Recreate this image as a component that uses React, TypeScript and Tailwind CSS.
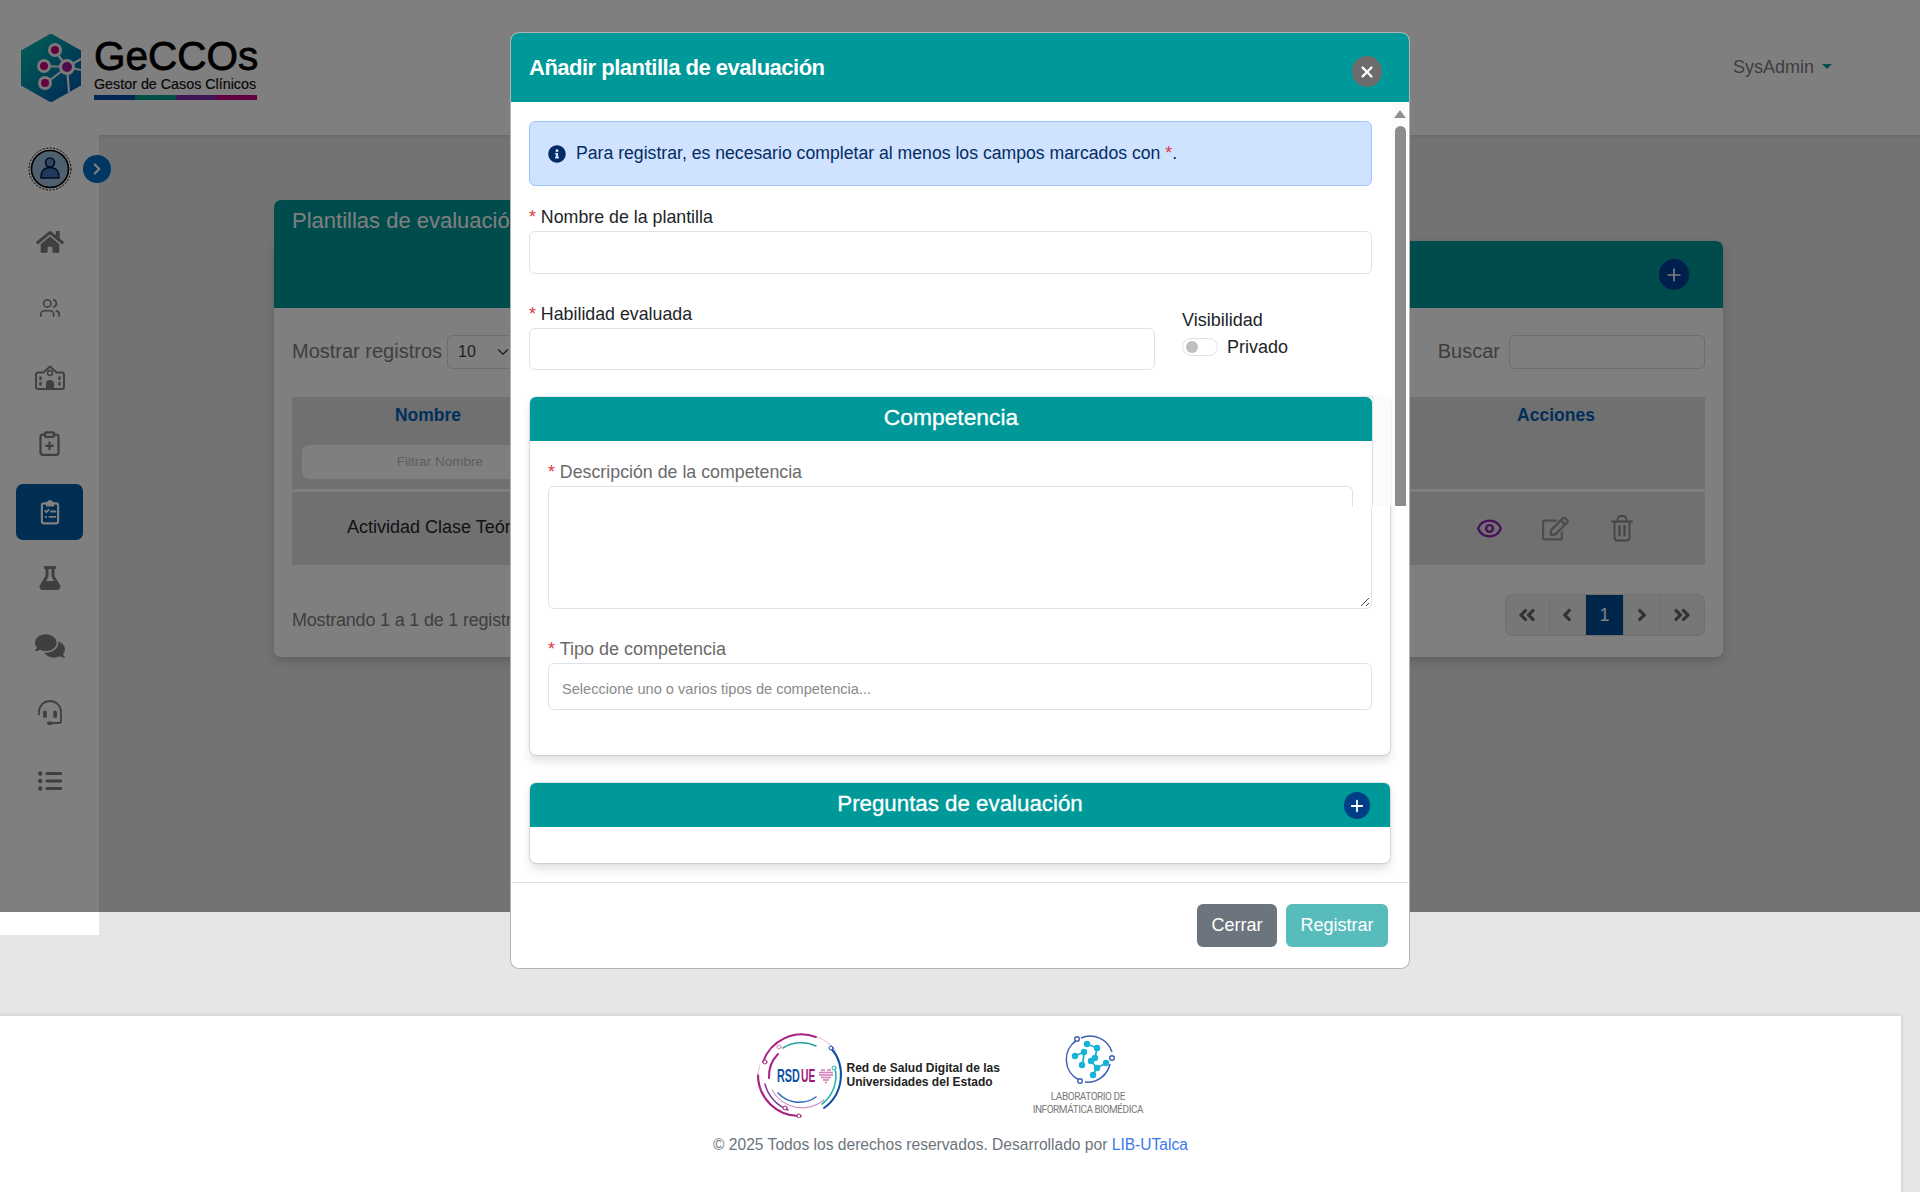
import {
  ChevronDown,
  ChevronRight,
  ClipboardPlus,
  Eye,
  Plus,
  Users,
  X,
} from "lucide-react";
import {
  FaAngleDoubleLeft,
  FaAngleDoubleRight,
  FaAngleLeft,
  FaAngleRight,
  FaComments,
  FaFlask,
  FaHome,
  FaInfoCircle,
  FaListUl,
  FaRegEdit,
} from "react-icons/fa";

const GeccosHex = () => (
  <svg width="60" height="68" viewBox="0 0 60 68">
    <defs>
      <linearGradient id="hexFill" x1="0" y1="0" x2="1" y2="1">
        <stop offset="0" stopColor="#00c0a8" />
        <stop offset="1" stopColor="#0050b0" />
      </linearGradient>
    </defs>
    <path d="M30 0 60 17V51L30 68 0 51V17Z" fill="url(#hexFill)" stroke="url(#hexFill)" strokeLinejoin="round" />
    <g stroke="#f2f2f2" strokeWidth="2.2" fill="none">
      <path d="M34 17 46 33M23 32 46 33M24 50 46 33M46 33 48 58M46 33 60 25M46 33 60 36" />
    </g>
    <g stroke="#f2f2f2" strokeWidth="3" fill="#c8007e">
      <circle cx="34" cy="16" r="5.5" />
      <circle cx="23" cy="32" r="5.5" />
      <circle cx="24" cy="49" r="5.5" />
      <circle cx="46" cy="33" r="6.5" fill="#9a1a98" />
    </g>
  </svg>
);

const Avatar = () => (
  <svg className="shrink-0" width="44" height="44" viewBox="0 0 44 44">
    <circle cx="22" cy="22" r="21" fill="none" stroke="#000" strokeWidth="1" strokeDasharray="2 1.5" />
    <circle cx="22" cy="22" r="18.5" fill="#9fc0dd" stroke="#000" strokeWidth="1.6" />
    <circle cx="22" cy="15.5" r="4.5" fill="#5f8fc2" stroke="#00163a" strokeWidth="1.6" />
    <path d="M13 31c0-8 3-10.500 9-10.500s9 2.500 9 10.500z" fill="#3f74b8" stroke="#00163a" strokeWidth="1.6" strokeLinejoin="round" />
  </svg>
);

const SchoolIcon = () => (
  <svg width="30" height="25" viewBox="0 0 30 25" fill="none" stroke="currentColor" strokeWidth="1.900" strokeLinejoin="round" strokeLinecap="round">
    <path d="M8.500 7.500H3a2 2 0 0 0-2 2V22a2 2 0 0 0 2 2h24a2 2 0 0 0 2-2V9.500a2 2 0 0 0-2-2h-5.500L15 1.500z" />
    <circle cx="15" cy="8" r="2.400" strokeWidth="1.500" />
    <path d="M11 24v-5a4 4 0 0 1 8 0v5z" fill="currentColor" stroke="none" />
    <path d="M5.500 12.500v1.500M5.500 18v1.500M24.500 12.500v1.500M24.500 18v1.500" strokeWidth="2.400" />
  </svg>
);

const ClipboardChecklist = () => (
  <svg width="26" height="26" viewBox="0 0 24 24" fill="none" stroke="currentColor" strokeWidth="2" strokeLinecap="round" strokeLinejoin="round">
    <rect x="4.500" y="4" width="15" height="18.500" rx="2" />
    <path d="M9 4.500V3.500h1.500a1.500 1.500 0 0 1 3 0H15v2.500H9z" fill="currentColor" />
    <path d="M7.500 11l1.200 1.200 2-2.200M13 11.500h4M8 16.500h.5M11.500 16.500H17" strokeWidth="1.700" />
  </svg>
);

const Headset = () => (
  <svg width="26" height="26" viewBox="0 0 26 26" fill="none" stroke="currentColor" strokeWidth="1.800" strokeLinecap="round">
    <path d="M2 14.500V12a11 11 0 0 1 22 0v9c0 1.500-1 2-2 2h-6" />
    <rect x="6" y="10.500" width="3.800" height="7.500" rx="1.900" fill="currentColor" stroke="none" />
    <rect x="16.200" y="10.500" width="3.800" height="7.500" rx="1.900" fill="currentColor" stroke="none" />
    <rect x="10" y="21.500" width="6" height="3.500" rx="1.750" fill="currentColor" stroke="none" />
  </svg>
);

const Trash = () => (
  <svg className="text-[#888888]" width="22" height="27" viewBox="0 0 22 27" fill="none" stroke="currentColor" strokeWidth="1.800" strokeLinecap="round" strokeLinejoin="round">
    <path d="M1 6.500h20M3.500 6.500V22.500a3 3 0 0 0 3 3h9a3 3 0 0 0 3-3V6.500" />
    <path d="M6.500 6.500V4.500a3.500 3.500 0 0 1 3.500-3.500h2a3.500 3.500 0 0 1 3.500 3.500v2" />
    <path d="M8.500 11v9.500M13.500 11v9.500" strokeWidth="2.200" />
  </svg>
);

// puntos del corazón del logo RSDUE: [fila y, desde x, hasta x]
const heartRows = [
  [38, 66, 68],
  [38, 72, 74],
  [40.500, 64, 76],
  [43, 64, 76],
  [45.500, 66, 74],
  [48, 68, 72],
  [50.500, 70, 70],
];

const RsdueLogo = () => (
  <svg className="shrink-0" width="90" height="86" viewBox="0 0 90 86" fill="none" strokeLinecap="round">
    <path d="M7 30A41 41 0 0 1 60 5" stroke="#a8237f" strokeWidth="2" />
    <path d="M61 5A41 41 0 0 1 80 19" stroke="#e3b8d8" strokeWidth="1" />
    <path d="M75 16A41 41 0 0 1 68 76" stroke="#0d4ea6" strokeWidth="2" />
    <path d="M43 84A41 41 0 0 1 2 43" stroke="#a8237f" strokeWidth="2.200" />
    <path d="M2 43A41 41 0 0 1 4 33" stroke="#e3b8d8" strokeWidth="1" />
    <path d="M13 46A32 32 0 0 1 22 22" stroke="#a8237f" strokeWidth="2" />
    <path d="M9 52A38 38 0 0 0 32 78" stroke="#7c3f9c" strokeWidth="1.500" />
    <path d="M16 58A34 34 0 0 0 68 68" stroke="#c478b4" strokeWidth="1" />
    <path d="M27 16A34 34 0 0 1 60 14" stroke="#2a9fa4" strokeWidth="1.500" />
    <path d="M79 36A35 35 0 0 1 66 72" stroke="#2ab3ad" strokeWidth="1.600" />
    <path d="M22 61A29 29 0 0 0 60 65" stroke="#2068b8" strokeWidth="1.500" />
    <circle cx="9" cy="30" r="2" fill="#fff" stroke="#a8237f" />
    <circle cx="23" cy="15" r="2" fill="#fff" stroke="#e080c0" />
    <circle cx="75" cy="16" r="2" fill="#fff" stroke="#0d4ea6" />
    <circle cx="78" cy="36" r="2" fill="#fff" stroke="#2ab3ad" />
    <circle cx="43" cy="84" r="2" fill="#fff" stroke="#a8237f" />
    <circle cx="29" cy="76" r="2" fill="#fff" stroke="#a8237f" />
    <text transform="translate(21 50) scale(0.57 1)" fontFamily="'Liberation Sans', sans-serif" fontWeight="700" fontSize="19" fill="#0d4ea6">RSD</text>
    <text transform="translate(45 50) scale(0.54 1)" fontFamily="'Liberation Sans', sans-serif" fontWeight="700" fontSize="19" fill="#a0187a">UE</text>
    <g fill="#c86aa8">
      {heartRows.flatMap(([y, from, to]) => {
        const dots = [];
        for (let x = from; x <= to; x += 2) dots.push(<circle key={`${y}-${x}`} cx={x} cy={y} r="0.900" />);
        return dots;
      })}
    </g>
  </svg>
);

const LabLogo = () => (
  <svg width="52" height="52" viewBox="0 0 52 52" fill="none">
    <path d="M12 6A23 23 0 0 0 14 46" stroke="#3c5fb0" strokeWidth="1.500" />
    <path d="M16 4A23 23 0 0 1 47 18M45 30A23 23 0 0 1 20 48" stroke="#3c5fb0" strokeWidth="1.500" />
    <circle cx="12" cy="5" r="2.300" fill="#fff" stroke="#3c5fb0" strokeWidth="1.400" />
    <circle cx="47" cy="24" r="2.300" fill="#fff" stroke="#3c5fb0" strokeWidth="1.400" />
    <circle cx="15" cy="47" r="2.300" fill="#fff" stroke="#3c5fb0" strokeWidth="1.400" />
    <path d="M22 10 32 14M32 14 30 24M10 22 19 18M19 18 18 28M26 27 32 34M32 34 41 29M32 34 28 41M16 32 18 28" stroke="#17b3d6" strokeWidth="1.800" />
    <g fill="#17b3d6">
      <circle cx="22" cy="10" r="3.200" />
      <circle cx="32" cy="14" r="3.200" />
      <circle cx="30" cy="24" r="3.200" />
      <circle cx="19" cy="18" r="3.200" />
      <circle cx="10" cy="22" r="3.200" />
      <circle cx="17" cy="31" r="3.200" />
      <circle cx="26" cy="27" r="3.200" />
      <circle cx="41" cy="29" r="3.200" />
      <circle cx="32" cy="34" r="3.200" />
      <circle cx="28" cy="41" r="3.200" />
    </g>
  </svg>
);

const sideIcons = [
  { key: "home", node: <FaHome size={28} />, h: "h-[66px]" },
  { key: "users", node: <Users size={22} strokeWidth={1.8} />, h: "h-[66px]" },
  { key: "school", node: <SchoolIcon />, h: "h-[72px]" },
  { key: "plus", node: <ClipboardPlus size={27} strokeWidth={2} />, h: "h-[60px]" },
];

const Req = () => <span className="text-[#dc3545]">*</span>;

const PageBtn = ({ w, children, active }: { w: string; children: React.ReactNode; active?: boolean }) => (
  <div
    className={`flex h-full items-center justify-center border-r border-[#dedede] last:border-r-0 ${w} ${
      active ? "bg-[#004c99] text-[18px] text-white" : "text-[#666]"
    }`}
  >
    {children}
  </div>
);

export default function App() {
  return (
    <div className="relative flex h-[1192px] w-[1920px] flex-col overflow-hidden bg-[#e6e6e6] font-['Liberation_Sans',Arial,sans-serif]">
      {/* top bar */}
      <header className="flex h-[135px] shrink-0 items-center justify-between bg-white pl-[21px] pr-[88px] shadow-[0_1px_3px_rgba(0,0,0,0.12)]">
        <div className="flex items-center gap-[13px]">
          <GeccosHex />
          <div className="flex w-[163px] flex-col">
            <span className="text-[40.500px] font-normal leading-[40px] text-black [-webkit-text-stroke:0.8px_#000]">GeCCOs</span>
            <span className="whitespace-nowrap text-[14.300px] leading-[16px] text-[#111] [-webkit-text-stroke:0.2px_#111]">Gestor de Casos Clínicos</span>
            <div className="mt-[3px] flex h-[5px]">
              <div className="flex-1 bg-[#004fa8]" />
              <div className="flex-1 bg-[#00a08c]" />
              <div className="flex-1 bg-[#7a28b0]" />
              <div className="flex-1 bg-[#c0007e]" />
            </div>
          </div>
        </div>
        <div className="flex items-center gap-[8px] text-[18px] text-[#7d7d7d]">
          SysAdmin
          <span className="mb-[3px] h-0 w-0 border-x-[5px] border-t-[5px] border-x-transparent border-t-[#00a090]" />
        </div>
      </header>

      <div className="flex">
        {/* sidebar */}
        <aside className="relative flex h-[800px] w-[99px] shrink-0 flex-col items-center bg-white pt-[12px] text-[#7f7f7f]">
          <div className="flex w-full items-center pl-[28px]">
            <Avatar />
            <div className="ml-[11px] flex h-[28px] w-[28px] shrink-0 items-center justify-center rounded-full bg-[#006cc4] text-white">
              <ChevronRight size={18} strokeWidth={3} />
            </div>
          </div>
          <div className="mt-[18px] flex w-full flex-col items-center">
            {sideIcons.map((item) => (
              <div key={item.key} className={`flex w-full items-center justify-center ${item.h}`}>
                {item.node}
              </div>
            ))}
            <div className="ml-[16px] mt-[11px] flex h-[56px] w-[67px] items-center justify-center self-start rounded-[7px] bg-[#005aa4] text-white">
              <ClipboardChecklist />
            </div>
            <div className="flex h-[76px] w-full items-center justify-center">
              <FaFlask size={24} />
            </div>
            <div className="flex h-[60px] w-full items-center justify-center">
              <FaComments size={30} />
            </div>
            <div className="flex h-[74px] w-full items-center justify-center">
              <Headset />
            </div>
            <div className="flex h-[62px] w-full items-center justify-center">
              <FaListUl size={24} />
            </div>
          </div>
        </aside>

        {/* listado de plantillas */}
        <main className="ml-[175px] pt-[65px]">
          <div className="flex w-[1449px] flex-col">
            <div className="h-[41px] w-[400px] rounded-t-[7px] bg-[#009999] pl-[18px] pt-[5px] text-[22px] leading-[32px] text-white">Plantillas de evaluación</div>
            <div className="rounded-[7px] rounded-tl-none bg-white shadow-[0_4px_10px_rgba(0,0,0,0.18)]">
              <div className="flex h-[67px] items-center justify-end rounded-tr-[7px] bg-[#009999] pr-[34px]">
                <div className="flex h-[31px] w-[30px] items-center justify-center rounded-full bg-[#003f9a] text-white">
                  <Plus size={20} strokeWidth={2} />
                </div>
              </div>
              <div className="flex flex-col px-[18px] pb-[21px] pt-[27px]">
                <div className="flex h-[34px] items-center justify-between text-[20px] text-[#7d7d7d]">
                  <div className="flex items-center gap-[5px]">
                    <span className="pb-[2px]">Mostrar registros</span>
                    <div className="flex h-[34px] w-[70px] items-center justify-between rounded-l-[5px] border border-[#dddddd] bg-white pl-[10px] pr-[4px] text-[16px] text-[#444]">
                      10
                      <ChevronDown size={18} strokeWidth={2} />
                    </div>
                  </div>
                  <div className="flex items-center gap-[9px]">
                    <span className="pb-[2px]">Buscar</span>
                    <div className="h-[34px] w-[196px] rounded-[5px] border border-[#dddddd] bg-white" />
                  </div>
                </div>

                <div className="mt-[28px] flex h-[92px] justify-between bg-[#e0e0e0]">
                  <div className="w-[272px] pt-[7px] text-center">
                    <div className="text-[17.500px] font-bold leading-[22px] text-[#005fb5]">Nombre</div>
                    <div className="ml-[10px] mt-[19px] flex h-[34px] w-[276px] items-center justify-center rounded-[7px] bg-white text-[13.500px] text-[#c0c0c0]">Filtrar Nombre</div>
                  </div>
                  <div className="w-[298px] pt-[7px] text-center text-[17.500px] font-bold leading-[22px] text-[#005fb5]">Acciones</div>
                </div>
                <div className="mt-[3px] flex h-[73px] items-center justify-between bg-[#e0e0e0] pl-[55px]">
                  <span className="pb-[2px] text-[18px] text-[#212529]">Actividad Clase Teórica</span>
                  <div className="flex w-[298px] items-center justify-center pr-[3px]">
                    <Eye size={27} strokeWidth={2.2} className="text-[#941eb4]" />
                    <FaRegEdit size={27} className="ml-[39px] text-[#999999]" />
                    <div className="ml-[42px]"><Trash /></div>
                  </div>
                </div>

                <div className="mt-[29px] flex h-[42px] items-end justify-between">
                  <span className="pb-[5px] text-[18px] leading-[22px] tracking-[-0.2px] text-[#7d7d7d]">Mostrando 1 a 1 de 1 registros</span>
                  <div className="flex h-[42px] w-[200px] overflow-hidden rounded-[7px] border border-[#dedede] bg-[#eeeeee]">
                    <PageBtn w="w-[44px]"><FaAngleDoubleLeft size={20} /></PageBtn>
                    <PageBtn w="w-[37px]"><FaAngleLeft size={20} /></PageBtn>
                    <PageBtn w="w-[38px]" active>1</PageBtn>
                    <PageBtn w="w-[37px]"><FaAngleRight size={20} /></PageBtn>
                    <PageBtn w="w-[44px]"><FaAngleDoubleRight size={20} /></PageBtn>
                  </div>
                </div>
              </div>
            </div>
          </div>
        </main>
      </div>

      {/* pie */}
      <footer className="mt-[81px] flex h-[176px] w-[1901px] flex-col items-center bg-white pt-[16px] shadow-[0_0_5px_rgba(0,0,0,0.15)]">
        <div className="flex w-[390px] items-start">
          <RsdueLogo />
          <div className="ml-[1px] mt-[29px] whitespace-nowrap text-[12px] font-bold leading-[14px] text-[#222]">
            <div>Red de Salud Digital de las</div>
            <div>Universidades del Estado</div>
          </div>
          <div className="ml-[36px] mt-[2px] flex w-[110px] shrink-0 flex-col items-center">
            <LabLogo />
            <div className="ml-[-6px] mt-[4px] whitespace-nowrap text-center font-['Roboto',sans-serif] text-[10px] leading-[13px] tracking-[-0.45px] text-[#7a7a7a]">
              <div>LABORATORIO DE</div>
              <div>INFORMÁTICA BIOMÉDICA</div>
            </div>
          </div>
        </div>
        <div className="mt-[17px] text-[15.600px] leading-[20px] text-[#6c757d]">
          © 2025 Todos los derechos reservados. Desarrollado por <span className="text-[#3b78f0]">LIB-UTalca</span>
        </div>
      </footer>

      {/* backdrop */}
      <div className="absolute left-0 top-0 h-[912px] w-full bg-black/50" />

      {/* modal */}
      <div className="absolute left-[510px] top-[32px] flex h-[937px] w-[900px] flex-col overflow-hidden rounded-[9px] border border-black/30 bg-white">
        <div className="flex h-[69px] shrink-0 items-start justify-between bg-[#009999] pl-[18px] pr-[27px] text-white">
          <h1 className="pt-[21px] text-[22px] font-semibold leading-[28px] tracking-[-0.5px]">Añadir plantilla de evaluación</h1>
          <div className="mt-[23px] flex h-[31px] w-[30px] items-center justify-center rounded-full bg-[#6c6c6c]">
            <X size={18} strokeWidth={3} />
          </div>
        </div>

        <div className="relative flex h-[780px] shrink-0 flex-col pl-[18px] pt-[19px] text-[17.800px] text-[#212529]">
          <div className="flex h-[65px] w-[843px] items-center rounded-[6px] border border-[#9ec5fe] bg-[#cfe2ff] pl-[18px] text-[17.650px] text-[#052c65]">
            <FaInfoCircle size={18} className="mr-[10px] text-[#052c65]" />
            <span>Para registrar, es necesario completar al menos los campos marcados con <Req />.</span>
          </div>

          <label className="mt-[20px] h-[22px] leading-[22px]"><Req /> Nombre de la plantilla</label>
          <div className="mt-[3px] h-[43px] w-[843px] rounded-[6px] border border-[#dee2e6]" />

          <div className="mt-[29px] flex h-[67px]">
            <div className="w-[626px]">
              <label className="block h-[22px] leading-[22px]"><Req /> Habilidad evaluada</label>
              <div className="mt-[3px] h-[42px] rounded-[6px] border border-[#dee2e6]" />
            </div>
            <div className="ml-[27px] pt-[6px]">
              <div className="h-[22px] text-[18px] leading-[22px]">Visibilidad</div>
              <div className="mt-[5px] flex h-[22px] items-center gap-[9px] text-[18px]">
                <div className="flex h-[18px] w-[36px] items-center rounded-full border border-[#dee2e6] pl-[3px]">
                  <span className="h-[12px] w-[12px] rounded-full bg-[#bfbfbf]" />
                </div>
                Privado
              </div>
            </div>
          </div>

          {/* competencia */}
          <div className="relative ml-[1px] mt-[27px] h-[358px] w-[860px] shrink-0 rounded-[6px] bg-white shadow-[0_0_2px_rgba(0,0,0,0.35),0_6px_10px_rgba(0,0,0,0.12)]">
            <div className="flex h-[44px] w-[842px] items-center justify-center rounded-t-[6px] bg-[#009999] pb-[3px] text-[22.800px] text-white [-webkit-text-stroke:0.3px_#fff]">Competencia</div>
            <div className="flex flex-col pl-[18px] pt-[20px] text-[#6a6a6a]">
              <label className="h-[22px] leading-[22px]"><Req /> Descripción de la competencia</label>
              <div className="relative mt-[3px] h-[123px] w-[824px] rounded-[6px] border border-[#dee2e6]">
                <svg className="absolute bottom-[1px] right-[1px]" width="10" height="10" viewBox="0 0 10 10" stroke="#444" strokeWidth="1">
                  <path d="M1 9 9 1M6 9 9 6" />
                </svg>
              </div>
              <label className="mt-[29px] h-[22px] text-[18px] leading-[22px]"><Req /> Tipo de competencia</label>
              <div className="mt-[3px] flex h-[47px] w-[824px] items-center rounded-[6px] border border-[#dee2e6] pl-[13px] pt-[6px] text-[14.600px] text-[#8a8a8a]">Seleccione uno o varios tipos de competencia...</div>
            </div>

            {/* parte superior sin repintar */}
            <div className="absolute left-[842px] top-[-1px] h-[110px] w-[19px] border-l border-[#e0e0e0] bg-[#fbfbfb]" />
            <div className="absolute left-[814px] top-[89px] flex h-[21px] w-[28px] bg-white">
              <div className="h-full w-[9px] rounded-tr-[6px] border-r border-t border-[#dee2e6]" />
            </div>
          </div>

          {/* preguntas */}
          <div className="ml-[1px] mt-[28px] h-[80px] w-[860px] shrink-0 rounded-[6px] bg-white shadow-[0_0_2px_rgba(0,0,0,0.35),0_6px_10px_rgba(0,0,0,0.12)]">
            <div className="relative flex h-[44px] items-center justify-center rounded-t-[6px] bg-[#009999] pb-[3px] text-[22.300px] text-white [-webkit-text-stroke:0.3px_#fff]">
              Preguntas de evaluación
              <div className="absolute right-[20px] top-[9px] flex h-[27px] w-[26px] items-center justify-center rounded-full bg-[#003f88]">
                <Plus size={18} strokeWidth={2.4} />
              </div>
            </div>
          </div>

          {/* barra de scroll */}
          <div className="absolute left-[881px] top-0 flex h-[404px] w-[16px] flex-col items-center bg-[#fbfbfb] pt-[8px]">
            <span className="h-0 w-0 border-x-[6px] border-b-[8px] border-x-transparent border-b-[#8f8f8f]" />
            <span className="mt-[8px] w-[11px] flex-1 rounded-t-[6px] bg-[#8c8c8c]" />
          </div>
        </div>

        <div className="flex flex-1 justify-end gap-[9px] border-t border-[#dee2e6] pr-[21px] pt-[21px] text-[18px] text-white">
          <div className="flex h-[43px] w-[80px] items-center justify-center rounded-[6px] bg-[#6c757d]">Cerrar</div>
          <div className="flex h-[43px] w-[102px] items-center justify-center rounded-[6px] bg-[#59bcbc]">Registrar</div>
        </div>
      </div>
    </div>
  );
}
